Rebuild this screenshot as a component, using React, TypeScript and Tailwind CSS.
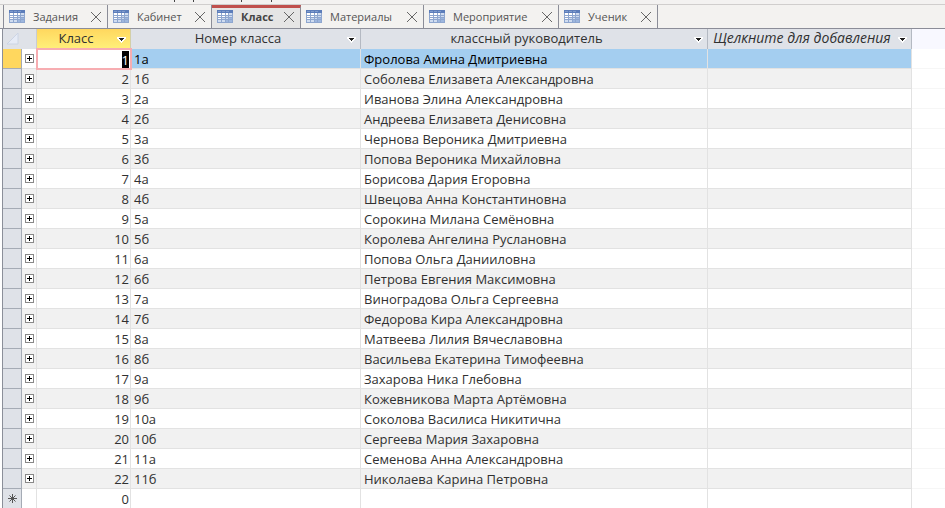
import React from "react";

const tabs = [
  { name: "Задания", width: "w-[105px] border-l" },
  { name: "Кабинет", width: "w-[104px]" },
  { name: "Класс", width: "w-[89px]", active: true },
  { name: "Материалы", width: "w-[123px]" },
  { name: "Мероприятие", width: "w-[135px]" },
  { name: "Ученик", width: "w-[99px]" },
];

const rows: [number, string, string][] = [
  [1, "1а", "Фролова Амина Дмитриевна"],
  [2, "1б", "Соболева Елизавета Александровна"],
  [3, "2а", "Иванова Элина Александровна"],
  [4, "2б", "Андреева Елизавета Денисовна"],
  [5, "3а", "Чернова Вероника Дмитриевна"],
  [6, "3б", "Попова Вероника Михайловна"],
  [7, "4а", "Борисова Дария Егоровна"],
  [8, "4б", "Швецова Анна Константиновна"],
  [9, "5а", "Сорокина Милана Семёновна"],
  [10, "5б", "Королева Ангелина Руслановна"],
  [11, "6а", "Попова Ольга Данииловна"],
  [12, "6б", "Петрова Евгения Максимовна"],
  [13, "7а", "Виноградова Ольга Сергеевна"],
  [14, "7б", "Федорова Кира Александровна"],
  [15, "8а", "Матвеева Лилия Вячеславовна"],
  [16, "8б", "Васильева Екатерина Тимофеевна"],
  [17, "9а", "Захарова Ника Глебовна"],
  [18, "9б", "Кожевникова Марта Артёмовна"],
  [19, "10а", "Соколова Василиса Никитична"],
  [20, "10б", "Сергеева Мария Захаровна"],
  [21, "11а", "Семенова Анна Александровна"],
  [22, "11б", "Николаева Карина Петровна"],
];

function TableIcon() {
  return (
    <svg width="16" height="13" viewBox="0 0 16 13" shapeRendering="crispEdges" aria-hidden="true">
      <rect width="16" height="13" fill="#8ea6cf" />
      <rect width="16" height="3" fill="#5c7dba" />
      <path d="M1 1h3v1H1zM5 1h3v1H5zM9 1h3v1H9z" fill="#7f9bcd" />
      {[3, 6, 8, 10].map((y, r) => (
        <g key={y}>
          {[1, 5, 9, 12].map((x, c) => (
            <rect
              key={x}
              x={x}
              y={y}
              width={c === 2 ? 2 : 3}
              height={r % 3 === 0 ? 2 : 1}
              fill={c + r > 4 ? "#9db6de" : c + r > 2 ? "#cfdcf0" : "#ffffff"}
            />
          ))}
        </g>
      ))}
    </svg>
  );
}

function Header({ children, selected }: { children: React.ReactNode; selected?: boolean }) {
  return (
    <th
      scope="col"
      className={`border-r p-0 font-normal ${
        selected
          ? "border-[#d3cfa8] bg-linear-to-b from-[#ffd75e] to-[#fff07a]"
          : "border-[#b4b9c2] bg-[#dfe2e8]"
      }`}
    >
      <div className="flex h-5 items-center pr-[3px]">
        <span className="flex-1 pb-0.5 text-center whitespace-nowrap">{children}</span>
        <button type="button" aria-label="Фильтр" className="flex h-5 w-3 items-center justify-center pt-0.5">
          <svg width="9" height="6" viewBox="0 0 9 6" shapeRendering="crispEdges" aria-hidden="true">
            <path d="M0 0h9v2h-1v1h-1v1h-1v1h-1v1h-1v-1h-1v-1h-1v-1h-1v-1h-1z" fill="#fff" />
            <path d="M2 1h5v1h-1v1h-1v1h-1v-1h-1v-1h-1z" fill="#222" />
          </svg>
        </button>
      </div>
    </th>
  );
}

export default function App() {
  return (
    <main className="h-screen overflow-hidden bg-white font-['Open_Sans','Noto_Sans',sans-serif] text-[13px] leading-5 text-[#303030]">
      <div className="h-[5px] border-b border-[#d0cecd] bg-[#f3f2f1] pl-[174px]">
        <svg className="block" width="98" height="2" viewBox="0 0 98 2" aria-hidden="true">
          <path d="M0 0h1v2H0zM19 0h1v2h-1zM67 0h1v2h-1zM97 0h1v2h-1z" fill="#444" />
        </svg>
      </div>
      <nav className="flex h-6 border-b border-[#8b8d98] bg-[#f3f2f0] pl-[3px]">
        {tabs.map((t) => (
          <div
            key={t.name}
            className={`flex shrink-0 items-center border-r border-[#8b8d98] px-[5px] ${t.width} ${
              t.active ? "border-t-3 border-t-[#c0504d] bg-[#e5e5e5] pb-[3px]" : ""
            }`}
          >
            <TableIcon />
            <button
              type="button"
              className={`ml-2 flex-1 text-left text-[11px] ${t.active ? "font-bold text-[#444]" : "text-[#555]"}`}
            >
              {t.name}
            </button>
            <button type="button" aria-label={`Закрыть ${t.name}`}>
              <svg width="12" height="12" viewBox="0 0 12 12" stroke="#666" strokeWidth="1" aria-hidden="true">
                <path d="M1 1l10 10M11 1l-10 10" />
              </svg>
            </button>
          </div>
        ))}
      </nav>
      <div className="ml-[2px] border-l border-[#8b8f99]">
        <table className="w-full table-fixed border-separate border-spacing-0">
          <colgroup>
            <col className="w-[19px]" />
            <col className="w-[15px]" />
            <col className="w-[94px]" />
            <col className="w-[230px]" />
            <col className="w-[347px]" />
            <col className="w-[204px]" />
            <col />
          </colgroup>
          <thead>
            <tr>
              <th colSpan={2} className="border-r border-[#c8ccd3] bg-[#dfe2e8] p-0">
                <svg className="ml-1" width="12" height="12" viewBox="0 0 12 12" aria-hidden="true">
                  <path d="M11 0v11H0z" fill="#e6ebf6" stroke="#ccd4e4" strokeWidth="1" />
                </svg>
              </th>
              <Header selected>Класс</Header>
              <Header>Номер класса</Header>
              <Header>классный руководитель</Header>
              <Header>
                <i className="text-sm">Щелкните для добавления</i>
              </Header>
              <th className="bg-[#f8f8ff] p-0" />
            </tr>
          </thead>
          <tbody>
            {rows.map(([id, name, teacher], i) => {
              const first = i === 0;
              const fill = first ? "bg-[#a4cef0] text-black" : i % 2 ? "bg-[#f1f1f1]" : "bg-white";
              const cell = `h-5 border-r border-b border-[#e2e2e2] p-0 pt-0.5 whitespace-nowrap leading-[17px] ${fill}`;
              return (
                <tr key={id}>
                  <td className={`border-r border-b border-[#a5abb5] p-0 ${first ? "bg-[#ffd75e]" : "bg-[#dfe2e8]"}`} />
                  <td className={`h-5 border-r border-b border-[#e2e2e2] p-0 ${i % 2 ? "bg-[#f1f1f1]" : "bg-white"}`}>
                    <button type="button" aria-label="Развернуть" className="mx-auto block">
                      <svg width="9" height="9" viewBox="0 0 9 9" shapeRendering="crispEdges" aria-hidden="true">
                        <path d="M.5.5h8v8h-8z" fill="#fff" stroke="#888" />
                        <path d="M2 4h5v1H2zM4 2h1v5H4z" fill="#000" />
                      </svg>
                    </button>
                  </td>
                  {first ? (
                    <td className="relative z-10 h-5 bg-white p-0 pt-px pr-0.5 text-right leading-[18px] outline-2 -outline-offset-1 outline-[#f7adb1]">
                      <span className="inline-block bg-black text-white">{id}</span>
                    </td>
                  ) : (
                    <td className={`${cell} pr-px text-right`}>{id}</td>
                  )}
                  <td className={`${cell} pl-[3px]`}>{name}</td>
                  <td className={`${cell} pl-[3px]`}>{teacher}</td>
                  <td className={cell} />
                  <td className="border-b border-[#f6f6f6] p-0" />
                </tr>
              );
            })}
            <tr>
              <td className="border-r border-b border-[#a5abb5] bg-[#dfe2e8] p-0">
                <svg className="mx-auto" width="9" height="9" viewBox="0 0 9 9" stroke="#555" aria-hidden="true">
                  <path d="M4.5 0v9M0 4.5h9M1.5 1.5l6 6M7.5 1.5l-6 6" />
                </svg>
              </td>
              <td className="border-r border-b border-[#e2e2e2] p-0" />
              <td className="h-5 border-r border-b border-[#e2e2e2] p-0 pt-0.5 pr-px text-right leading-[17px]">0</td>
              <td className="border-r border-b border-[#e2e2e2] p-0" />
              <td className="border-r border-b border-[#e2e2e2] p-0" />
              <td className="border-r border-b border-[#e2e2e2] p-0" />
              <td className="border-b border-[#f6f6f6] p-0" />
            </tr>
          </tbody>
        </table>
      </div>
    </main>
  );
}
